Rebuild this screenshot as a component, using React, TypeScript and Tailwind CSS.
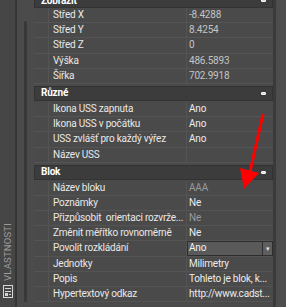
import React from "react";

type Row = {
  label: string;
  value?: string;
  tone?: "ro" | "dim" | "dropdown";
};

const sections: { title: string; rows: Row[] }[] = [
  {
    title: "Zobrazit",
    rows: [
      { label: "Střed X", value: "-8.4288", tone: "ro" },
      { label: "Střed Y", value: "8.4254", tone: "ro" },
      { label: "Střed Z", value: "0", tone: "ro" },
      { label: "Výška", value: "486.5893", tone: "ro" },
      { label: "Šířka", value: "702.9918", tone: "ro" },
    ],
  },
  {
    title: "Různé",
    rows: [
      { label: "Ikona USS zapnuta", value: "Ano" },
      { label: "Ikona USS v počátku", value: "Ano" },
      { label: "USS zvlášť pro každý výřez", value: "Ano" },
      { label: "Název USS", value: "" },
    ],
  },
  {
    title: "Blok",
    rows: [
      { label: "Název bloku", value: "AAA", tone: "dim" },
      { label: "Poznámky", value: "Ne" },
      { label: "Přizpůsobit  orientaci rozvrže...", value: "Ne", tone: "dim" },
      { label: "Změnit měřítko rovnoměrně", value: "Ne" },
      { label: "Povolit rozkládání", value: "Ano", tone: "dropdown" },
      { label: "Jednotky", value: "Milimetry" },
      { label: "Popis", value: "Tohleto je blok, k..." },
      { label: "Hypertextový odkaz", value: "http://www.cadst..." },
    ],
  },
];

function Header({ title }: { title: string }) {
  return (
    <div className="h-[15px] shrink-0 flex items-center justify-between bg-[#3c3c3c] border border-[#333] pl-[6px] pr-[6px]">
      <span className="font-bold text-white">{title}</span>
      <span className="w-[5px] h-[3px] bg-[#d8d8d8] border border-white rounded-[1px]" />
    </div>
  );
}

function PropRow({ row }: { row: Row }) {
  const valueColor =
    row.tone === "ro"
      ? "text-[#c4c4c4]"
      : row.tone === "dim"
      ? "text-[#9a9a9a]"
      : "text-[#ececec]";

  return (
    <div className="h-[15.2px] shrink-0 flex border-b border-[#545454] leading-[14px]">
      <div className="w-[14px] shrink-0" />
      <div className="w-[139px] shrink-0 border-l border-r border-[#545454] pl-[4px] pr-[3px] overflow-hidden whitespace-pre text-[#e8e8e8]">
        {row.label}
      </div>
      {row.tone === "dropdown" ? (
        <div className="flex-1 min-w-0 flex border border-[#2e2e2e] bg-[#5a5a5a] leading-[12px]">
          <div className="flex-1 pl-[1px] text-[#f2f2f2]">{row.value}</div>
          <div className="w-[10px] border-l border-[#2e2e2e] bg-[#5e5e5e] flex items-center justify-center text-[7px] text-[#e0e0e0]">
            ▾
          </div>
        </div>
      ) : (
        <div className={`flex-1 min-w-0 pl-[2px] pr-[2px] truncate ${valueColor}`}>
          {row.value}
        </div>
      )}
    </div>
  );
}

export default function App() {
  return (
    <div
      className="relative w-[286px] h-[307px] overflow-hidden flex bg-[#4a4a4a] text-[10px] tracking-[-0.2px] leading-none"
      style={{ fontFamily: 'Roboto, "Noto Sans", sans-serif' }}
    >
      {/* side tab */}
      <div className="w-[15px] shrink-0 bg-[#464646] flex flex-col items-center justify-end pb-[9px]">
        <div className="mb-[4px] [writing-mode:vertical-rl] rotate-180 text-[9.5px] tracking-[0.2px] text-[#9e9e9e]">
          VLASTNOSTI
        </div>
        <svg width="10" height="13" viewBox="0 0 10 13" className="text-[#d6d6d6]">
          <rect x="0.5" y="0.5" width="9" height="12" fill="none" stroke="currentColor" />
          <line x1="2" y1="3.5" x2="8" y2="3.5" stroke="currentColor" />
          <line x1="2" y1="6.5" x2="8" y2="6.5" stroke="currentColor" />
          <rect x="2" y="8" width="3" height="3" fill="currentColor" />
          <line x1="6" y1="9.5" x2="8" y2="9.5" stroke="currentColor" />
        </svg>
      </div>
      <div className="w-[2px] shrink-0 bg-[#363636]" />

      {/* scroll column */}
      <div className="w-[17px] shrink-0 bg-[#4b4b4b] pt-[21px] pb-[5px] flex justify-center">
        <div className="w-[3px] h-full rounded-full bg-[#383838]" />
      </div>

      {/* property grid */}
      <div className="w-[239px] shrink-0 flex flex-col -mt-[7px]">
        {sections.map((s, i) => (
          <div key={s.title} className={i === 0 ? "" : "mt-[2px]"}>
            <Header title={s.title} />
            <div className={i === 0 ? "" : "mt-[1px]"}>
              {s.rows.map((r) => (
                <PropRow key={r.label} row={r} />
              ))}
            </div>
          </div>
        ))}
      </div>

      <div className="w-[3px] shrink-0 bg-[#3a3a3a]" />
      <div className="flex-1 bg-[#4d4d4d]" />

      {/* red annotation arrow */}
      <svg className="absolute left-0 top-0 pointer-events-none" width="286" height="307">
        <line x1="263" y1="114" x2="250" y2="172" stroke="#ff0000" strokeWidth="3" />
        <polygon points="240,168 259,173 244,189" fill="#ff0000" />
      </svg>
    </div>
  );
}
